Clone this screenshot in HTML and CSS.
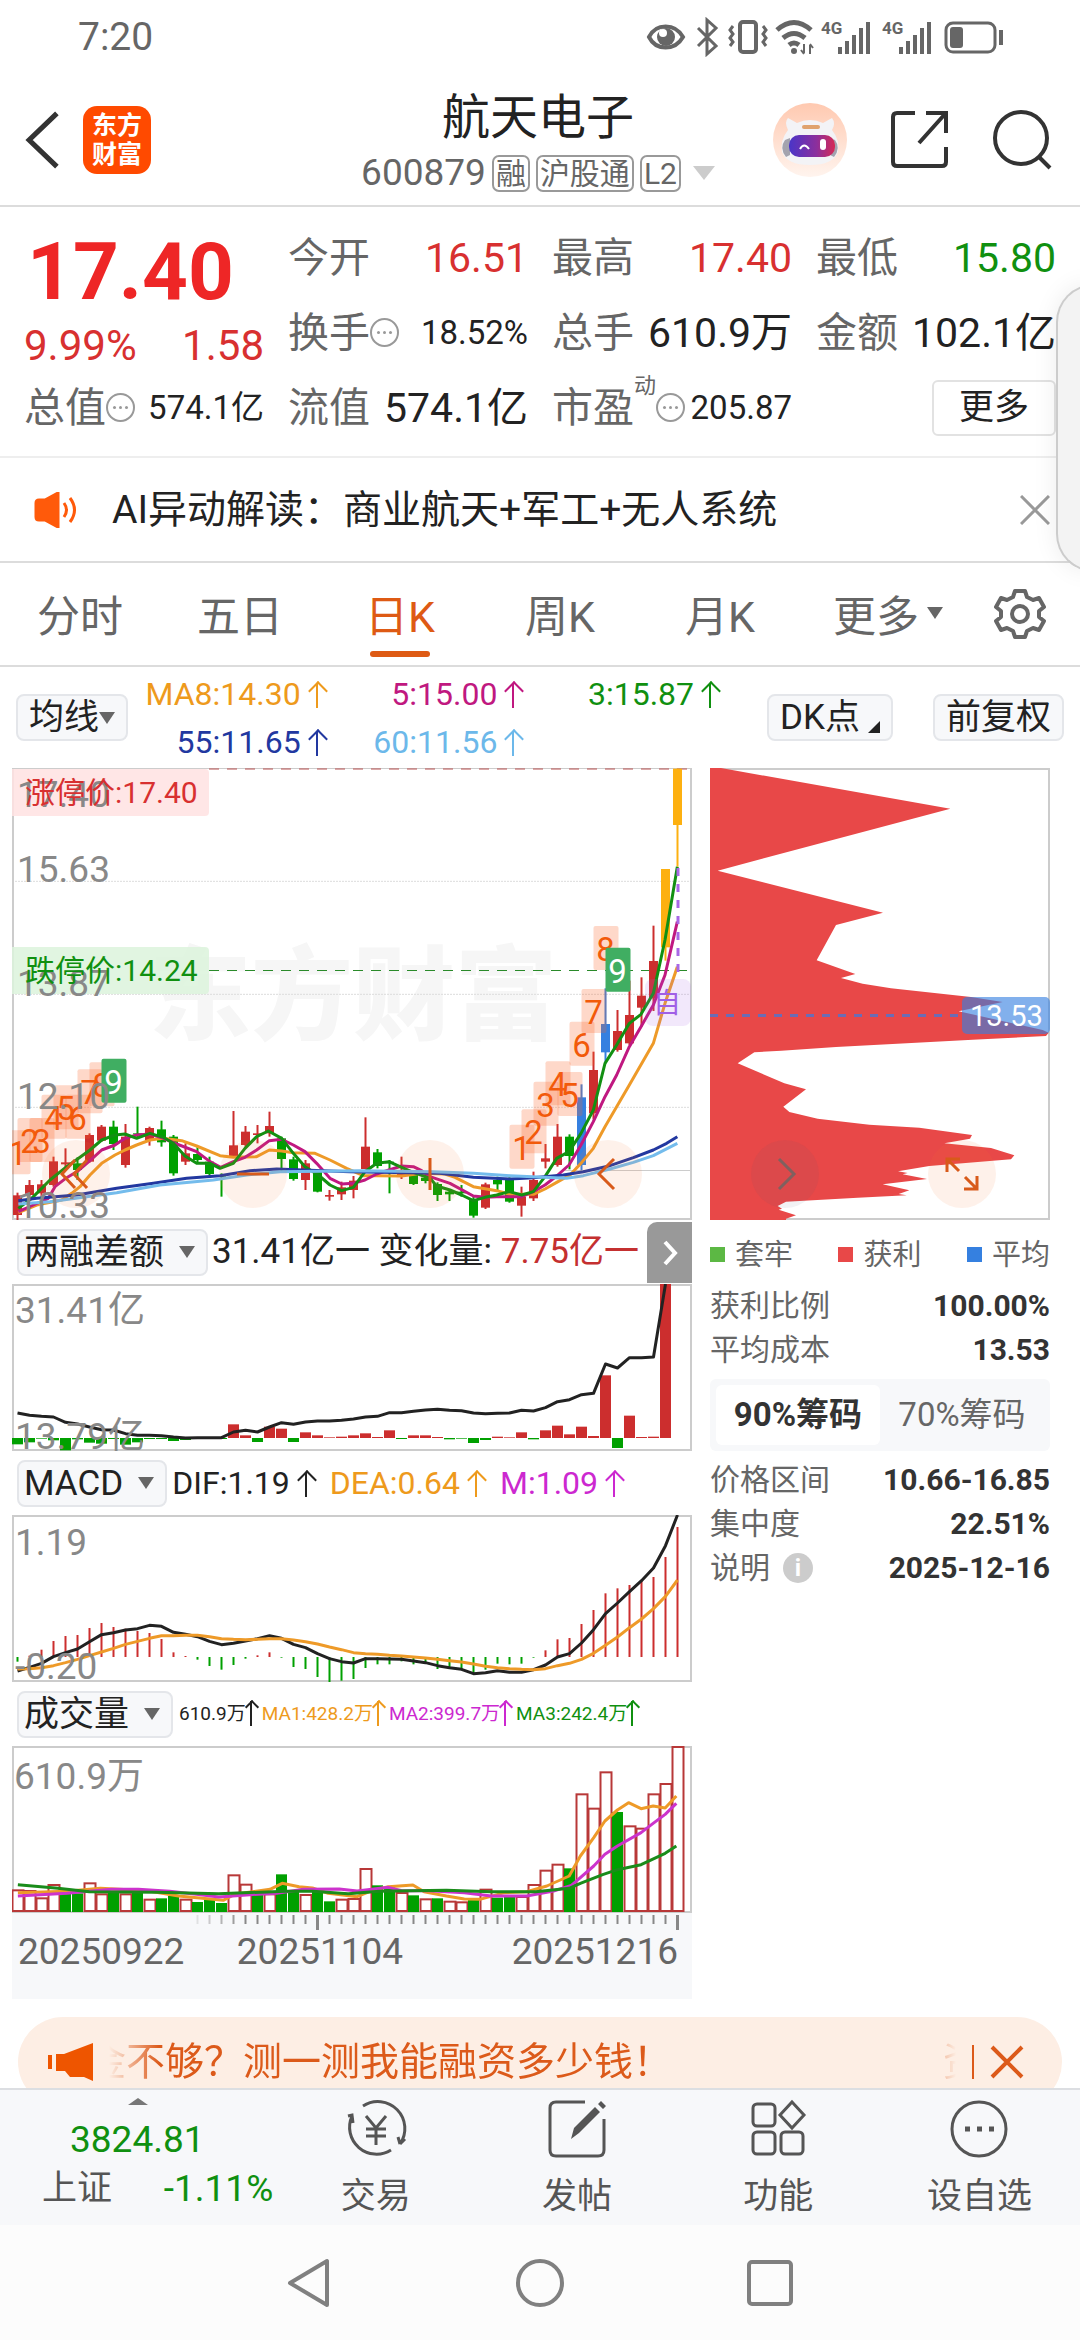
FILE: index.html
```html
<!DOCTYPE html>
<html lang="zh-CN">
<head>
    <meta charset="UTF-8">
    <meta name="viewport" content="width=device-width, initial-scale=1.0">
    <title>航天电子 600879</title>
    <link rel="stylesheet" href="styles.css">
</head>
<body>
    <div class="status-bar">
        <span class="clock">7:20</span>
        <svg class="status-icons" viewBox="0 0 364 40" fill="none" stroke="#666" stroke-width="4">
            <path d="M3 20C10 6 29 6 37 20C29 34 10 34 3 20Z"/>
            <circle cx="20" cy="20" r="9" fill="#666" stroke="none"/><circle cx="17" cy="16" r="4" fill="#fff" stroke="none"/>
            <path d="M52 11l18 18-9 8V3l9 8-18 18" stroke-width="3"/>
            <rect x="94" y="5" width="16" height="30" rx="3"/>
            <path d="M87 9l-3 4 3 4-3 4 3 4-3 4M117 9l3 4-3 4 3 4-3 4 3 4" stroke-width="3"/>
            <path d="M131 13q17-15 34 0M137 21q11-9 22 0M143 28q5-4 10 0" stroke-width="5"/>
            <circle cx="148" cy="34" r="3" fill="#666" stroke="none"/>
            <path d="M158 27v9m-3-3l3 4M164 37v-9m3 3l-3-4" stroke-width="2"/>
            <text x="175" y="17">4G</text>
            <path d="M194 30v7M201 24v13M208 18v19M215 11v26M222 5v32"/>
            <text x="236" y="17">4G</text>
            <path d="M255 30v7M262 24v13M269 18v19M276 11v26M283 5v32"/>
            <rect x="300" y="6" width="49" height="29" rx="7" stroke-width="3"/>
            <rect x="304" y="10" width="13" height="21" rx="3" fill="#666" stroke="none"/>
            <path d="M355 13v15"/>
        </svg>
    </div>

    <header class="header">
        <div class="header-side">
            <button class="icon-btn back" aria-label="返回">
                <svg viewBox="0 0 36 58" fill="none" stroke="#333" stroke-width="5"><path d="M32 3L5 29l27 26"/></svg>
            </button>
            <a class="logo" href="#"><span>东方</span><span>财富</span></a>
        </div>
        <div class="stock-title">
            <h1>航天电子</h1>
            <div class="stock-code">
                <span class="code">600879</span>
                <span class="tag">融</span>
                <span class="tag">沪股通</span>
                <span class="tag">L2</span>
                <svg class="caret" viewBox="0 0 22 14"><path d="M0 0h22L11 14z" fill="#ccc"/></svg>
            </div>
        </div>
        <div class="header-side header-right">
            <button class="icon-btn robot" aria-label="AI助手">
                <svg viewBox="0 0 76 76">
                    <defs>
                        <linearGradient id="halo" x1="0" y1="0" x2="0" y2="1"><stop offset="0" stop-color="#ffc9b0"/><stop offset="1" stop-color="#fff4ee"/></linearGradient>
                        <linearGradient id="face"><stop offset="0" stop-color="#4a35c8"/><stop offset="0.6" stop-color="#8c2f9c"/><stop offset="1" stop-color="#d62a55"/></linearGradient>
                    </defs>
                    <circle cx="38" cy="38" r="37" fill="url(#halo)"/>
                    <path d="M16 28q-4-8 0-12l9 5q13-6 26 0l9-5q4 5 0 12 8 10 6 22-5 13-28 13T10 50q-2-12 6-22z" fill="#f3f3f6"/>
                    <path d="M13 38q-6 8 1 17l4-2V36zM63 38q6 8-1 17l-4-2V36z" fill="#a3a3ae"/>
                    <rect x="30" y="23" width="18" height="4" rx="2" fill="#e0a36e"/>
                    <rect x="17" y="33" width="46" height="22" rx="10" fill="url(#face)"/>
                    <path d="M28 47q4-7 9 0" stroke="#fff" stroke-width="2" fill="none"/>
                    <rect x="48" y="37" width="6" height="11" rx="3" fill="#fff"/>
                </svg>
            </button>
            <button class="icon-btn" aria-label="分享">
                <svg viewBox="0 0 60 60" fill="none" stroke="#333" stroke-width="4"><path d="M25 3H7q-4 0-4 4v45q0 4 4 4h45q4 0 4-4V37M36 3h20v20M55 4L29 33"/></svg>
            </button>
            <button class="icon-btn" aria-label="搜索">
                <svg viewBox="0 0 60 60" fill="none" stroke="#333" stroke-width="4"><circle cx="29" cy="28" r="26"/><path d="M47 47l11 11"/></svg>
            </button>
        </div>
    </header>

    <main class="content">
        <section class="quote">
            <div class="price-block">
                <div class="price">17.40</div>
                <div class="change"><span>9.99%</span><span>1.58</span></div>
            </div>
            <div class="item"><span>今开</span><b class="up">16.51</b></div>
            <div class="item"><span>最高</span><b class="up">17.40</b></div>
            <div class="item"><span>最低</span><b class="down">15.80</b></div>
            <div class="item"><span>换手</span><i class="dots"></i><b class="small">18.52%</b></div>
            <div class="item"><span>总手</span><b>610.9万</b></div>
            <div class="item"><span>金额</span><b>102.1亿</b></div>
            <div class="item"><span>总值</span><i class="dots"></i><b class="small">574.1亿</b></div>
            <div class="item"><span>流值</span><b>574.1亿</b></div>
            <div class="item"><span>市盈</span><sup>动</sup><i class="dots"></i><b class="small">205.87</b></div>
            <div class="item"><button class="more-btn">更多</button></div>
        </section>

        <section class="notice">
            <svg class="speaker" viewBox="0 0 44 36" fill="none" stroke="#ff5a0a" stroke-width="3"><path d="M2 11q0-3 3-3h6L24 1v34l-13-7H5q-3 0-3-3z" fill="#ff5a0a"/><path d="M30 11q5 7 0 14M36 6q9 12 0 24"/></svg>
            <p>AI异动解读：商业航天+军工+无人系统</p>
            <button class="close" aria-label="关闭">
                <svg viewBox="0 0 30 30" stroke="#999" stroke-width="3"><path d="M1 1l28 28M29 1L1 29"/></svg>
            </button>
        </section>

        <nav class="tabs">
            <a href="#">分时</a>
            <a href="#">五日</a>
            <a href="#" class="active">日K</a>
            <a href="#">周K</a>
            <a href="#">月K</a>
            <a href="#" class="more">更多<span class="arrow-down"></span></a>
            <button class="settings" aria-label="设置">
                <svg viewBox="0 0 52 52" fill="none" stroke="#666" stroke-width="4" stroke-linejoin="round"><path d="M21 3h10l2 6 6 3 6-2 5 9-5 4v6l5 4-5 9-6-2-6 3-2 6H21l-2-6-6-3-6 2-5-9 5-4v-6l-5-4 5-9 6 2 6-3z"/><circle cx="26" cy="26" r="8"/></svg>
            </button>
        </nav>

        <section class="ma-row">
            <button class="chip-btn">均线<span class="arrow-down"></span></button>
            <div class="ma-values">
                <span class="c-orange">MA8:14.30<i class="up-arrow"></i></span>
                <span class="c-magenta">5:15.00<i class="up-arrow"></i></span>
                <span class="c-green">3:15.87<i class="up-arrow"></i></span>
                <span class="c-navy">55:11.65<i class="up-arrow"></i></span>
                <span class="c-sky">60:11.56<i class="up-arrow"></i></span>
            </div>
            <div class="ma-actions">
                <button class="chip-btn">DK点<span class="corner"></span></button>
                <button class="chip-btn">前复权</button>
            </div>
        </section>

        <section class="charts">
            <div class="left-col">
                <svg id="kline" class="chart" viewBox="0 0 680 452"></svg>
                <div class="ind-row">
                    <button class="chip-btn wide">两融差额<span class="arrow-down"></span></button>
                    <p>31.41亿一 变化量: <span class="c-red">7.75亿一</span></p>
                    <button class="next" aria-label="下一个"><svg viewBox="0 0 16 26" fill="none" stroke="#fff" stroke-width="4"><path d="M3 2l10 11L3 24"/></svg></button>
                </div>
                <svg id="margin" class="chart" viewBox="0 0 680 167"></svg>
                <div class="ind-row macd-row">
                    <button class="chip-btn wide">MACD<span class="arrow-down"></span></button>
                    <span>DIF:1.19<i class="up-arrow"></i></span>
                    <span class="c-orange">DEA:0.64<i class="up-arrow"></i></span>
                    <span class="c-purple">M:1.09<i class="up-arrow"></i></span>
                </div>
                <svg id="macd" class="chart" viewBox="0 0 680 167"></svg>
                <div class="ind-row vol-row">
                    <button class="chip-btn wide">成交量<span class="arrow-down"></span></button>
                    <span>610.9万<i class="up-arrow"></i></span>
                    <span class="c-orange">MA1:428.2万<i class="up-arrow"></i></span>
                    <span class="c-purple">MA2:399.7万<i class="up-arrow"></i></span>
                    <span class="c-green">MA3:242.4万<i class="up-arrow"></i></span>
                </div>
                <svg id="volume" class="chart" viewBox="0 0 680 167"></svg>
                <div class="axis">
                    <svg id="ticks" class="chart" viewBox="0 0 680 18"></svg>
                    <div class="dates"><span>20250922</span><span>20251104</span><span>20251216</span></div>
                </div>
            </div>

            <aside class="right-col">
                <svg id="chips" class="chart" viewBox="0 0 340 452"></svg>
                <div class="legend">
                    <span class="l-green">套牢</span><span class="l-red">获利</span><span class="l-blue">平均</span>
                </div>
                <dl class="stats">
                    <div><dt>获利比例</dt><dd>100.00%</dd></div>
                    <div><dt>平均成本</dt><dd>13.53</dd></div>
                </dl>
                <div class="toggle">
                    <button class="on">90%筹码</button>
                    <button>70%筹码</button>
                </div>
                <dl class="stats">
                    <div><dt>价格区间</dt><dd>10.66-16.85</dd></div>
                    <div><dt>集中度</dt><dd>22.51%</dd></div>
                    <div><dt>说明<i class="info">i</i></dt><dd>2025-12-16</dd></div>
                </dl>
            </aside>

            <div class="chart-tools">
                <button aria-label="快退"><svg viewBox="0 0 34 34"><path d="M16 3L3 17l13 14M28 3L15 17l13 14"/></svg></button>
                <button aria-label="缩小"><svg viewBox="0 0 34 34"><path d="M1 17h32"/></svg></button>
                <button aria-label="放大"><svg viewBox="0 0 34 34"><path d="M17 1v32"/></svg></button>
                <button aria-label="左移"><svg viewBox="0 0 34 34"><path d="M23 2L8 17l15 15"/></svg></button>
                <button aria-label="右移" class="grey"><svg viewBox="0 0 34 34"><path d="M11 2l15 15-15 15"/></svg></button>
                <button aria-label="全屏"><svg viewBox="0 0 34 34"><path d="M2 15V2h13M3 3l11 11M32 19v13H19M31 31L20 20"/></svg></button>
            </div>
        </section>

        <section class="promo">
            <svg class="horn" viewBox="0 0 48 40" fill="#ee5500"><path d="M1 13h4v14H1zM9 12h8L46 1v38l-9-4H23l-5-6H9z"/></svg>
            <div class="marquee"><span>金不够？测一测我能融资多少钱！</span><span>资</span></div>
            <button class="close" aria-label="关闭">
                <svg viewBox="0 0 34 34" stroke="#dc5a1a" stroke-width="4"><path d="M2 2l30 30M32 2L2 32"/></svg>
            </button>
        </section>
    </main>

    <footer class="bottom-bar">
        <a class="index" href="#">
            <span class="arrow-up"></span>
            <strong>3824.81</strong>
            <span class="index-line"><span>上证</span><span class="percent">-1.11%</span></span>
        </a>
        <a href="#">
            <svg viewBox="0 0 66 60"><path d="M20 7a27 27 0 0 1 37 38M5 17l4-1 1 8M9 17a27 27 0 0 0 39 34M57 45l5-5M57 45l-2-7"/><path d="M23 17l10 12 10-12M33 29v17M23 30h20M23 37h20"/></svg>
            交易
        </a>
        <a href="#">
            <svg viewBox="0 0 60 60"><path d="M38 3H9q-6 0-6 6v42q0 6 6 6h42q6 0 6-6V20"/><path d="M24 40l3-11L48 8l5 5-21 21zM51 5l3-3 5 5-3 3z" fill="#555" stroke="none"/></svg>
            发帖
        </a>
        <a href="#">
            <svg viewBox="0 0 60 60"><rect x="5" y="5" width="22" height="22" rx="4"/><rect x="5" y="33" width="22" height="22" rx="4"/><rect x="33" y="33" width="22" height="22" rx="4"/><path d="M44 3l12 13-12 13-12-13z"/></svg>
            功能
        </a>
        <a href="#">
            <svg viewBox="0 0 60 60"><circle cx="30" cy="30" r="27"/><path d="M16 30h5M28 30h5M40 30h5" stroke-width="5"/></svg>
            设自选
        </a>
    </footer>

    <div class="system-nav">
        <button aria-label="返回"><svg viewBox="0 0 50 50"><path d="M42 3v44L5 25z"/></svg></button>
        <button aria-label="主页"><svg viewBox="0 0 50 50"><circle cx="25" cy="25" r="22"/></svg></button>
        <button aria-label="最近任务"><svg viewBox="0 0 50 50"><rect x="4" y="4" width="42" height="42" rx="3"/></svg></button>
    </div>

    <div class="side-handle"></div>

    <script src="charts.js"></script>
</body>
</html>
```
FILE: styles.css
```css
* {
    box-sizing: border-box;
}

body {
    margin: 0;
    height: 100vh;
    display: flex;
    flex-direction: column;
    background: #fff;
    color: #222;
    font-family: Roboto, "Noto Sans CJK SC", sans-serif;
    overflow: hidden;
}

button {
    font-family: inherit;
    border: none;
    background: none;
    padding: 0;
    margin: 0;
    color: inherit;
    cursor: pointer;
}

a {
    color: inherit;
    text-decoration: none;
}

p, h1, dl, dd {
    margin: 0;
}

i {
    font-style: normal;
}

svg {
    display: block;
}

.c-orange { color: #ee9a1c; }
.c-magenta { color: #c01880; }
.c-green { color: #109010; }
.c-navy { color: #2238a0; }
.c-sky { color: #6cb8ea; }
.c-purple { color: #cc28d0; }
.c-red { color: #c43030; }

/* top */
.status-bar {
    display: flex;
    justify-content: space-between;
    align-items: center;
    height: 74px;
    flex: none;
    padding: 0 70px 0 78px;
    color: #666;
}

.clock {
    font-size: 39px;
}

.status-icons {
    width: 364px;
    height: 40px;
}

.status-icons text {
    font-size: 17px;
    font-weight: 700;
    fill: #666;
    stroke: none;
}

.header {
    display: flex;
    justify-content: space-between;
    align-items: center;
    height: 133px;
    flex: none;
    border-bottom: 2px solid #dcdcdc;
    padding: 0 28px 0 24px;
}

.header-side {
    display: flex;
    align-items: center;
    width: 280px;
    gap: 22px;
}

.header-right {
    justify-content: flex-end;
    gap: 42px;
}

.icon-btn svg {
    width: 60px;
    height: 60px;
}

.icon-btn.back svg {
    width: 37px;
}

.icon-btn.robot svg {
    width: 76px;
    height: 76px;
}

.logo {
    display: flex;
    flex-direction: column;
    align-items: center;
    justify-content: center;
    width: 68px;
    height: 68px;
    border-radius: 14px;
    background: #ff4a00;
    color: #fff;
    font-size: 25px;
    font-weight: 700;
    line-height: 29px;
}

.stock-title {
    display: flex;
    flex-direction: column;
    align-items: center;
}

.stock-title h1 {
    font-size: 48px;
    font-weight: 400;
    line-height: 60px;
    margin-bottom: 7px;
}

.stock-code {
    display: flex;
    align-items: center;
    gap: 6px;
    line-height: 36px;
    color: #666;
}

.code {
    font-size: 37px;
}

.tag {
    border: 2px solid #999;
    border-radius: 7px;
    padding: 0 2px;
    height: 37px;
    font-size: 30px;
    line-height: 33px;
}

.caret {
    width: 22px;
    height: 14px;
    margin-left: 6px;
}

.content {
    flex: 1;
    min-height: 0;
    overflow: hidden;
}

/* quote */
.quote {
    display: grid;
    grid-template-columns: repeat(4, 1fr);
    grid-template-rows: repeat(3, 75px);
    column-gap: 24px;
    padding: 13px 24px 11px;
    border-bottom: 2px solid #eee;
}

.price-block {
    grid-row: span 2;
    color: #d83030;
    padding-top: 6px;
}

.price {
    font-size: 80px;
    font-weight: 700;
    line-height: 92px;
    padding-left: 3px;
    color: #ee2626;
}

.change {
    display: flex;
    justify-content: space-between;
    font-size: 42px;
    line-height: 56px;
}

.item {
    display: flex;
    align-items: center;
    font-size: 41px;
    line-height: 60px;
    color: #666;
    white-space: nowrap;
}

.item b {
    margin-left: auto;
    font-weight: 400;
    color: #222;
}

.item b.up { color: #d83030; }
.item b.down { color: #109010; }

.item .small {
    font-size: 33px;
}

.item sup {
    align-self: flex-start;
    font-size: 22px;
    line-height: 32px;
}

.dots {
    display: flex;
    align-items: center;
    justify-content: center;
    width: 29px;
    height: 29px;
    border: 2px solid #999;
    border-radius: 50%;
}

.dots::before {
    content: "";
    width: 3px;
    height: 3px;
    border-radius: 50%;
    background: #999;
    box-shadow: -6px 0 #999, 6px 0 #999;
}

.more-btn {
    margin-left: auto;
    width: 124px;
    height: 56px;
    border: 2px solid #e2e2e2;
    border-radius: 6px;
    font-size: 35px;
    line-height: 48px;
    color: #222;
}

.notice {
    display: flex;
    align-items: center;
    height: 105px;
    padding: 0 30px 0 34px;
    border-bottom: 2px solid #dcdcdc;
    font-size: 39px;
    line-height: 50px;
}

.notice .speaker {
    width: 44px;
    height: 36px;
    margin-right: 34px;
}

.close {
    margin-left: auto;
}

.notice .close svg {
    width: 30px;
    height: 30px;
}

.tabs {
    display: grid;
    grid-template-columns: repeat(6, 4fr) 3fr;
    height: 104px;
    border-bottom: 2px solid #dcdcdc;
    font-size: 43px;
    color: #666;
}

.tabs a {
    position: relative;
    display: flex;
    align-items: center;
    justify-content: center;
    padding-bottom: 2px;
}

.tabs .more {
    padding-left: 16px;
}

.tabs a.active {
    color: #de5a14;
}

.tabs a.active::after {
    content: "";
    position: absolute;
    bottom: 8px;
    width: 60px;
    height: 6px;
    border-radius: 3px;
    background: #de5a14;
}

.arrow-down {
    display: inline-block;
    border: 8px solid transparent;
    border-top: 12px solid #666;
    border-bottom: 0;
}

.tabs .arrow-down {
    margin-left: 8px;
}

.settings {
    display: flex;
    align-items: center;
    justify-content: center;
}

.settings svg {
    width: 52px;
    height: 52px;
}

.ma-row {
    display: flex;
    align-items: center;
    height: 101px;
    padding: 0 16px;
}

.chip-btn {
    display: flex;
    align-items: center;
    height: 47px;
    padding: 0 5px;
    border: 2px solid #e4e6ea;
    border-radius: 8px;
    background: #f7f8fa;
    font-size: 35px;
    line-height: 43px;
    white-space: nowrap;
}

.ma-row .chip-btn {
    padding: 0 11px;
}

.chip-btn.wide .arrow-down {
    margin: 0 6px 0 15px;
}

.chip-btn .corner {
    margin: 18px 0 0 8px;
    border-left: 12px solid transparent;
    border-bottom: 12px solid #222;
}

.ma-values {
    flex: 1;
    display: grid;
    grid-template-columns: repeat(3, 1fr);
    font-size: 32px;
    line-height: 48px;
    text-align: right;
    padding-right: 49px;
}

.ma-actions {
    display: flex;
    gap: 40px;
}

.up-arrow {
    position: relative;
    display: inline-block;
    width: 17px;
    height: 26px;
    margin-left: 7px;
    vertical-align: -3px;
}

.up-arrow::before {
    content: "";
    position: absolute;
    left: 8px;
    top: 1px;
    width: 2px;
    height: 25px;
    background: currentColor;
}

.up-arrow::after {
    content: "";
    position: absolute;
    left: 3px;
    top: 2px;
    width: 12px;
    height: 12px;
    border: 2px solid currentColor;
    border-right: 0;
    border-bottom: 0;
    transform: rotate(45deg);
}

/* charts */
.charts {
    position: relative;
    display: grid;
    grid-template-columns: minmax(0, 680fr) minmax(0, 340fr);
    gap: 18px;
    padding: 0 30px 0 12px;
}

.chart {
    width: 100%;
    height: auto;
}

.chart .frame { fill: none; stroke: #ccc; stroke-width: 2; }
.chart .grid { stroke: #ddd; stroke-width: 1; stroke-dasharray: 2 1; }
.chart .label { font-size: 37px; fill: #888; }
.chart .watermark { font-size: 102px; font-weight: 900; fill: #f6f6f6; }
.chart .line { fill: none; stroke-width: 3; stroke-linejoin: round; }
.chart .limit { font-size: 30px; }
.chart .tag-num { font-size: 33px; text-anchor: middle; fill: #f25a0a; }
.chart .tag-num.nine { fill: #fff; }

.ind-row {
    position: relative;
    display: flex;
    align-items: center;
    height: 64px;
    padding-left: 5px;
    font-size: 35px;
    line-height: 44px;
    white-space: nowrap;
}

.ind-row p {
    margin-left: 4px;
}

.next {
    position: absolute;
    right: 0;
    top: 2px;
    display: flex;
    align-items: center;
    justify-content: center;
    width: 45px;
    height: 61px;
    border-radius: 10px 0 0 0;
    background: #999;
}

.next svg {
    width: 16px;
    height: 26px;
}

.macd-row {
    gap: 16px;
    font-size: 32px;
}

.macd-row .chip-btn {
    margin-right: -11px;
}

.vol-row {
    gap: 6px;
    font-size: 19px;
}

.vol-row .up-arrow {
    width: 14px;
    margin: 0 -2px;
    vertical-align: -6px;
}

.vol-row .up-arrow::before {
    left: 6px;
}

.vol-row .up-arrow::after {
    left: 3px;
    width: 8px;
    height: 8px;
}

.axis {
    height: 86px;
    background: #f7f8fa;
}

.dates {
    display: flex;
    justify-content: space-between;
    padding: 0 14px 0 6px;
    font-size: 37px;
    line-height: 42px;
    color: #666;
}

.dates span:nth-child(2) {
    margin-right: 56px;
}

.legend {
    display: flex;
    justify-content: space-between;
    height: 64px;
    align-items: center;
    font-size: 29px;
    color: #666;
}

.legend span::before {
    content: "";
    display: inline-block;
    width: 15px;
    height: 15px;
    margin-right: 10px;
    vertical-align: 3px;
}

.l-green::before { background: #5cb844; }
.l-red::before { background: #e84848; }
.l-blue::before { background: #3580e0; }

.stats div {
    display: flex;
    justify-content: space-between;
    font-size: 30px;
    line-height: 44px;
}

.stats dt {
    display: flex;
    align-items: center;
    color: #666;
}

.stats dd {
    font-weight: 700;
    color: #333;
}

.info {
    width: 30px;
    height: 30px;
    margin-left: 13px;
    border-radius: 50%;
    background: #ccc;
    color: #fff;
    font-size: 24px;
    font-weight: 700;
    line-height: 30px;
    text-align: center;
}

.toggle {
    display: grid;
    grid-template-columns: 1fr 1fr;
    height: 72px;
    margin: 7px 0;
    padding: 6px;
    border-radius: 6px;
    background: #f7f8fa;
}

.toggle button {
    font-size: 33px;
    line-height: 44px;
    color: #666;
    border-radius: 6px;
}

.toggle .on {
    background: #fff;
    color: #333;
    font-weight: 700;
}

.chart-tools {
    position: absolute;
    top: 372px;
    left: 42px;
    right: 84px;
    display: flex;
    justify-content: space-between;
}

.chart-tools button {
    display: flex;
    align-items: center;
    justify-content: center;
    width: 68px;
    height: 68px;
    border-radius: 50%;
    background: rgba(250, 120, 50, 0.1);
}

.chart-tools button.grey {
    background: rgba(90, 90, 110, 0.08);
}

.chart-tools svg {
    width: 34px;
    height: 34px;
    fill: none;
    stroke: #d85a1a;
    stroke-width: 3;
}

.chart-tools .grey svg {
    stroke: #80605f;
}

.promo {
    display: flex;
    align-items: center;
    height: 90px;
    margin: 18px 18px 0;
    padding: 0 38px 0 29px;
    border-radius: 45px;
    background: #fdeee4;
    color: #dc5a1a;
    font-size: 39px;
    line-height: 50px;
}

.horn {
    width: 48px;
    height: 40px;
    flex: none;
}

.marquee {
    flex: 1;
    display: flex;
    justify-content: space-between;
    overflow: hidden;
    margin: 0 16px 0 14px;
    text-indent: -22px;
    white-space: nowrap;
    -webkit-mask-image: linear-gradient(to right, transparent, #000 50px, #000 95%, transparent);
    mask-image: linear-gradient(to right, transparent, #000 50px, #000 95%, transparent);
}

.marquee span:last-child {
    text-indent: 0;
    margin-right: -26px;
}

.promo .close {
    padding-left: 16px;
    border-left: 2px solid #dc5a1a;
}

.promo .close svg {
    width: 34px;
    height: 34px;
}

/* bottom */
.bottom-bar {
    flex: none;
    display: grid;
    grid-template-columns: 275fr repeat(4, 201fr);
    height: 137px;
    border-top: 2px solid #dcdee2;
    background: #f7f8fa;
    color: #555;
    font-size: 35px;
    line-height: 44px;
}

.bottom-bar a {
    display: flex;
    flex-direction: column;
    align-items: center;
    gap: 16px;
    padding-top: 9px;
}

.bottom-bar svg {
    height: 60px;
    fill: none;
    stroke: #555;
    stroke-width: 3;
}

.bottom-bar .index {
    gap: 0;
    align-items: stretch;
    padding: 8px 2px 0 42px;
}

.index strong {
    font-size: 37px;
    font-weight: 400;
    line-height: 50px;
    margin-top: 10px;
    padding-left: 28px;
    color: #109010;
}

.index-line {
    display: flex;
    justify-content: space-between;
    line-height: 48px;
}

.percent {
    font-size: 37px;
    color: #109010;
}

.arrow-up {
    align-self: center;
    border: 10px solid transparent;
    border-bottom: 7px solid #777;
    border-top: 0;
    margin-right: 40px;
}

.system-nav {
    flex: none;
    display: flex;
    justify-content: center;
    gap: 180px;
    height: 115px;
    background: #fcfcfc;
}

.system-nav svg {
    width: 50px;
    height: 50px;
    fill: none;
    stroke: #808080;
    stroke-width: 4;
    stroke-linejoin: round;
}

/* edge panel over the page */
.side-handle {
    position: absolute;
    top: 284px;
    right: -14px;
    width: 38px;
    height: 288px;
    border: 2px solid #ccc;
    border-radius: 38px 0 0 38px;
    background: #f3f3f3;
    box-shadow: 0 0 24px rgba(0, 0, 0, 0.08);
}
```
FILE: charts.js
```js
const NS = 'http://www.w3.org/2000/svg';
const RED = '#cc2e2e';
const GREEN = '#00a000';
const ORANGE = '#ee9a28';
const PURPLE = '#cc33cc';

function add(parent, name, attrs, text) {
    const el = document.createElementNS(NS, name);
    for (const key in attrs) el.setAttribute(key, attrs[key]);
    if (text !== undefined) el.textContent = text;
    parent.appendChild(el);
    return el;
}

function line(svg, points, color) {
    add(svg, 'polyline', { class: 'line', points: points.map(p => p.join(',')).join(' '), stroke: color });
}

// "x,y x,y" -> [[x, y], ...] with scaling
function parse(str, sx, sy) {
    return str.trim().split(/\s+/).map(p => {
        const [x, y] = p.split(',').map(Number);
        return [sx(x), sy(y)];
    });
}

const barX = i => 5.5 + i * 12;

/* ---------- K line ---------- */
const kline = document.getElementById('kline');
const kx = v => (v - 36) / 3;
const ky = v => (v - 54) / 3;

// colour, body top, body bottom, high, low
const candles = [
    'r 1336 1395 1328 1412', 'r 1305 1335 1290 1345', 'r 1303 1330 1290 1340', 'r 1234 1305 1220 1310',
    'r 1237 1243 1195 1260', 'g 1240 1260 1222 1290', 'r 1155 1235 1150 1238', 'r 1130 1172 1125 1176',
    'g 1130 1182 1112 1200', 'r 1160 1245 1122 1253', 'g 1150 1153 1070 1165', 'r 1134 1170 1130 1187',
    'g 1138 1177 1112 1190', 'g 1160 1270 1155 1277', 'r 1210 1235 1180 1245', 'g 1212 1230 1190 1240',
    'g 1235 1272 1220 1277', 'g 1275 1280 1270 1340', 'r 1186 1220 1083 1222', 'r 1145 1185 1128 1190',
    'r 1150 1155 1125 1180', 'r 1128 1150 1085 1160', 'g 1165 1227 1160 1265', 'g 1228 1287 1220 1292',
    'r 1240 1290 1230 1320', 'g 1263 1325 1260 1327', 'r 1335 1340 1320 1352', 'r 1312 1333 1295 1350',
    'r 1292 1320 1278 1345', 'r 1190 1257 1102 1258', 'g 1207 1248 1197 1255', 'g 1235 1240 1230 1330',
    'r 1262 1280 1220 1287', 'g 1270 1302 1260 1305', 'g 1283 1293 1275 1300', 'g 1302 1335 1297 1353',
    'g 1325 1333 1318 1353', 'g 1325 1330 1305 1340', 'g 1350 1397 1340 1403', 'r 1303 1373 1298 1377',
    'g 1290 1303 1280 1322', 'g 1290 1355 1282 1358', 'r 1340 1367 1310 1400', 'r 1290 1345 1265 1353',
    'r 1225 1235 1182 1255', 'r 1160 1245 1122 1250', 'g 1160 1218 1153 1258', 'b 1042 1245 1003 1260',
    'r 960 1090 905 1108', 'b 822 907 715 940', 'r 843 900 780 905', 'r 795 880 692 885',
    'r 737 773 682 830', 'r 633 745 527 783', 'o 357 592 357 632', 'o 56 225 56 350'
];
const candleColors = { r: RED, g: GREEN, b: '#3580e0', o: '#fdb010' };

add(kline, 'text', { class: 'watermark', x: 137, y: 264 }, '东方财富');
[394, 733, 1072].forEach(v => add(kline, 'line', { class: 'grid', x1: 0, x2: 680, y1: ky(v), y2: ky(v) }));
add(kline, 'line', { x1: 553, x2: 680, y1: 402.5, y2: 402.5, stroke: '#ccc' });
add(kline, 'rect', { class: 'frame', x: 1, y: 0, width: 678, height: 451 });
add(kline, 'line', { x1: 197, x2: 676, y1: 1, y2: 1, stroke: '#b85050', 'stroke-width': 1, 'stroke-dasharray': '10 8' });
add(kline, 'line', { x1: 197, x2: 676, y1: 202.5, y2: 202.5, stroke: '#2a8a2a', 'stroke-width': 1, 'stroke-dasharray': '10 8' });

candles.forEach((row, i) => {
    const [c, ...v] = row.split(' ');
    const [top, bottom, high, low] = v.map(n => ky(Number(n)));
    const color = candleColors[c];
    add(kline, 'line', { x1: barX(i), x2: barX(i), y1: high, y2: low, stroke: color, 'stroke-width': 2 });
    add(kline, 'rect', { x: barX(i) - 4.5, y: top, width: 9, height: bottom - top, fill: color });
});

const maLines = [
    ['#ee9a28', '55,1388 110,1365 185,1350 215,1330 240,1310 270,1275 305,1240 345,1215 375,1200 410,1185 450,1170 490,1165 545,1172 590,1188 660,1217 700,1222 770,1220 808,1200 845,1203 880,1208 945,1210 990,1230 1040,1255 1090,1277 1130,1277 1205,1278 1265,1270 1335,1272 1365,1282 1420,1310 1490,1322 1530,1333 1600,1333 1635,1317 1670,1297 1710,1275 1743,1240 1780,1195 1815,1130 1888,1005 1960,880 1995,760 2032,650'],
    ['#c01880', '55,1385 100,1365 145,1345 165,1310 200,1283 235,1262 270,1232 305,1200 345,1185 375,1165 410,1155 450,1152 490,1165 530,1182 590,1205 630,1235 662,1252 700,1235 735,1222 770,1200 808,1172 845,1168 880,1185 915,1205 950,1240 990,1285 1025,1302 1060,1300 1095,1290 1130,1272 1167,1260 1205,1248 1240,1250 1265,1262 1290,1280 1350,1300 1420,1338 1455,1342 1490,1340 1565,1340 1600,1325 1635,1305 1670,1278 1707,1245 1743,1185 1780,1115 1815,1040 1850,975 1888,890 1923,830 1960,765 1995,675 2032,515'],
    ['#129012', '55,1375 95,1345 150,1290 200,1250 240,1222 270,1200 305,1170 345,1155 375,1152 410,1165 450,1150 490,1162 520,1180 555,1218 590,1240 630,1240 660,1255 700,1240 735,1195 770,1160 805,1143 845,1165 880,1210 915,1250 955,1275 990,1305 1025,1322 1060,1312 1095,1265 1130,1240 1167,1235 1205,1252 1240,1267 1290,1285 1310,1308 1350,1320 1385,1335 1420,1352 1455,1342 1490,1335 1528,1325 1565,1335 1600,1325 1635,1280 1670,1225 1707,1205 1743,1150 1780,1080 1815,940 1850,885 1888,820 1923,793 1960,730 1995,570 2032,350'],
    ['#2238a0', '55,1352 110,1345 230,1335 350,1315 460,1300 560,1285 660,1277 750,1262 830,1257 1050,1265 1320,1270 1420,1282 1530,1287 1600,1283 1690,1275 1750,1265 1830,1247 1900,1223 1960,1200 2000,1180 2032,1160'],
    ['#74bcec', '55,1362 150,1355 260,1340 350,1328 480,1305 640,1290 740,1275 840,1265 1080,1262 1300,1265 1420,1270 1530,1277 1700,1285 1750,1277 1830,1257 1900,1237 1960,1217 2032,1180']
];
maLines.forEach(([color, pts]) => line(kline, parse(pts, kx, ky), color));

add(kline, 'line', { x1: 666, x2: 666, y1: 100, y2: 206, stroke: '#a868e6', 'stroke-width': 3, 'stroke-dasharray': '8 8' });
add(kline, 'rect', { x: 633, y: 211, width: 46, height: 47, rx: 8, fill: '#a868e6', 'fill-opacity': 0.15 });
add(kline, 'text', { x: 641, y: 245, 'font-size': 28, fill: '#a060e6' }, '自');

// nine-turn counters: [first bar, tag centres]
[[0, [1207, 1170, 1170, 1100, 1072, 1100, 1024, 1003, 992]],
 [42, [1190, 1144, 1061, 1000, 1032, 881, 783, 594, 659]]].forEach(([start, ys]) => {
    ys.forEach((v, n) => {
        const nine = n === 8;
        const x = barX(start + n);
        add(kline, 'rect', { x: x - 12, y: ky(v) - 22, width: 25, height: 44, rx: 2, fill: nine ? '#40ae62' : '#fa6428', 'fill-opacity': nine ? 1 : 0.25 });
        add(kline, 'text', { class: nine ? 'tag-num nine' : 'tag-num', x: x, y: ky(v) + 13 }, n + 1);
    });
});

add(kline, 'path', { d: 'M0 1H193q4 0 4 4V44q0 4-4 4H0z', fill: '#ffe2e2', 'fill-opacity': 0.85 });
add(kline, 'path', { d: 'M0 179H193q4 0 4 4V222q0 4-4 4H0z', fill: '#dcf3dc', 'fill-opacity': 0.85 });
[['17.40', 170], ['15.63', 396], ['13.87', 738], ['12.10', 1077], ['10.33', 1405]].forEach(([t, v]) => {
    add(kline, 'text', { class: 'label', x: 5, y: ky(v) }, t);
});
add(kline, 'text', { class: 'limit', x: 13, y: 35, fill: '#d83030' }, '涨停价:17.40');
add(kline, 'text', { class: 'limit', x: 13, y: 213, fill: '#109010' }, '跌停价:14.24');

/* ---------- margin balance ---------- */
const margin = document.getElementById('margin');
const marginBars = [-19, -13, -2, -7, -37, -4, -14, -17, -3, -20, -13, -3, -3, -9, -6, -2, -2, -3, 41, 8, -12, 34, 28, -12, 17, 8, 2, 4, 8, 14, 3, 23, -3, 8, 8, 3, -4, -2, -15, -6, 4, 2, 17, -4, 23, 37, 11, 34, 6, 188, -30, 67, 3, 4, 463];
const marginLine = [580, 587, 590, 592, 608, 613, 622, 630, 631, 642, 647, 647, 648, 652, 655, 654, 654, 654, 637, 632, 637, 622, 609, 614, 607, 604, 604, 602, 598, 592, 590, 579, 579, 575, 571, 569, 572, 573, 580, 582, 581, 580, 572, 574, 564, 546, 540, 525, 521, 433, 445, 414, 414, 412, 193];

function bars(svg, values, zero, width) {
    values.forEach((v, i) => {
        const h = Math.abs(v) / 3;
        add(svg, 'rect', { x: barX(i) - width / 2, y: v > 0 ? zero - h : zero, width: width, height: h, fill: v > 0 ? RED : GREEN });
    });
}

add(margin, 'rect', { class: 'frame', x: 1, y: 1, width: 678, height: 165 });
bars(margin, marginBars, 154, 11);
line(margin, marginLine.map((v, i) => [barX(i), (v - 193) / 3]), '#222');
add(margin, 'text', { class: 'label', x: 3, y: 39 }, '31.41亿');
add(margin, 'text', { class: 'label', x: 3, y: 165 }, '13.79亿');

/* ---------- MACD ---------- */
const macd = document.getElementById('macd');
const macdBars = [-14, 4, 22, 48, 63, 66, 87, 102, 90, 85, 78, 72, 54, 14, 3, -8, -27, -38, -24, -5, 5, 14, -2, -30, -36, -60, -75, -71, -66, -33, -22, -22, -13, -22, -20, -36, -35, -38, -51, -38, -20, -22, -20, -2, 20, 53, 57, 99, 141, 191, 206, 216, 228, 240, 300, 390];
const dif = [664, 653, 641, 621, 609, 598, 576, 555, 549, 541, 537, 527, 530, 548, 554, 561, 575, 585, 581, 574, 567, 558, 566, 584, 594, 612, 627, 636, 640, 627, 627, 628, 629, 634, 639, 648, 654, 659, 672, 669, 663, 668, 668, 660, 646, 622, 612, 580, 540, 492, 460, 426, 393, 355, 288, 196];
const dea = [658, 657, 654, 648, 639, 629, 618, 607, 596, 584, 575, 566, 558, 558, 557, 557, 561, 567, 569, 570, 569, 567, 567, 571, 576, 583, 592, 600, 609, 612, 614, 617, 619, 622, 625, 629, 633, 637, 643, 650, 654, 657, 659, 660, 657, 648, 641, 629, 611, 587, 562, 534, 508, 477, 440, 391];

add(macd, 'rect', { class: 'frame', x: 1, y: 1, width: 678, height: 165 });
bars(macd, macdBars, 142, 2);
line(macd, dif.map((v, i) => [barX(i), (v - 196) / 3]), '#222');
line(macd, dea.map((v, i) => [barX(i), (v - 196) / 3]), ORANGE);
add(macd, 'text', { class: 'label', x: 3, y: 40 }, '1.19');
add(macd, 'text', { class: 'label', x: 3, y: 164 }, '-0.20');

/* ---------- volume ---------- */
const volume = document.getElementById('volume');
const volumes = 'r600 r602 r624 r584 g612 g612 r579 r612 g610 r612 g606 r628 g627 g620 r628 g638 g632 g641 r555 r583 g610 r612 g555 g608 r614 g606 g636 r628 r626 r536 g588 g594 r608 g618 r627 g627 r634 r636 g628 r598 g625 g623 r620 r584 r541 r523 g537 r312 r355 r246 g368 r408 r415 r312 r281 r170'.split(' ');
const vx = v => v / 2.24 - 12;
const vy = v => (v - 170) / 3;

add(volume, 'rect', { class: 'frame', x: 1, y: 1, width: 678, height: 165 });
volumes.forEach((s, i) => {
    const top = vy(Number(s.slice(1)));
    if (s[0] === 'g') {
        add(volume, 'rect', { x: barX(i) - 5.5, y: top, width: 11, height: 166 - top, fill: GREEN });
    } else {
        add(volume, 'rect', { x: barX(i) - 5, y: top + 1, width: 11, height: 164 - top, fill: '#fff', stroke: '#b83838', 'stroke-width': 2 });
    }
});
line(volume, parse('40,610 150,606 225,597 330,604 400,620 500,633 525,615 605,600 632,582 670,592 700,596 735,612 800,622 830,605 870,592 925,587 950,607 1000,620 1040,629 1075,630 1130,610 1180,607 1225,590 1275,560 1300,500 1330,445 1355,395 1383,362 1408,340 1436,358 1463,350 1490,356 1515,320', vx, vy), ORANGE);
line(volume, parse('40,620 150,612 250,600 310,600 380,606 440,615 490,623 560,616 620,612 680,600 760,599 800,605 870,594 900,604 960,604 1040,610 1100,620 1180,620 1240,605 1280,588 1330,530 1355,495 1383,470 1436,430 1463,402 1490,375 1515,342', vx, vy), PURPLE);
line(volume, parse('40,586 130,597 200,607 350,609 490,613 640,606 700,606 780,613 850,606 1000,603 1100,607 1200,607 1275,597 1300,582 1350,556 1383,541 1436,526 1490,492 1515,470', vx, vy), '#1a8c1a');
add(volume, 'text', { class: 'label', x: 2, y: 43 }, '610.9万');

const ticks = document.getElementById('ticks');
for (let i = 15; i < 56; i++) {
    const major = i === 25 || i === 55;
    add(ticks, 'line', { x1: barX(i), x2: barX(i), y1: 2, y2: major ? 17 : 11, stroke: '#888', 'stroke-width': major ? 3 : 2, opacity: Math.min(1, (i - 14) / 5) });
}

/* ---------- chip distribution ---------- */
const chips = document.getElementById('chips');
const profile = '62,56 95,56 783,178 85,364 581,490 440,527 382,633 498,674 455,686 520,703 605,717 845,743 940,758 808,786 1060,842 1078,850 1070,860 850,871 440,893 276,904 195,909 145,942 285,1002 350,1020 282,1072 300,1088 385,1108 540,1126 690,1135 848,1157 842,1168 765,1182 905,1196 975,1218 965,1230 720,1250 626,1266 655,1271 640,1275 713,1289 580,1305 660,1323 628,1334 652,1338 505,1345 290,1357 265,1370 278,1378 268,1381 320,1398 290,1408 290,1412 62,1412';
add(chips, 'rect', { class: 'frame', x: 1, y: 1, width: 338, height: 450 });
add(chips, 'polygon', { points: parse(profile, v => (v - 62) / 3, v => (v - 56) / 3).join(' '), fill: '#e84848' });
add(chips, 'line', { x1: 0, x2: 252, y1: 247.5, y2: 247.5, stroke: '#6c6cb4', 'stroke-width': 3, 'stroke-dasharray': '8 8' });
add(chips, 'rect', { x: 252, y: 229, width: 88, height: 37, rx: 5, fill: '#3580e0', 'fill-opacity': 0.62 });
add(chips, 'text', { x: 260, y: 258, 'font-size': 29, fill: '#fff' }, '13.53');
```
